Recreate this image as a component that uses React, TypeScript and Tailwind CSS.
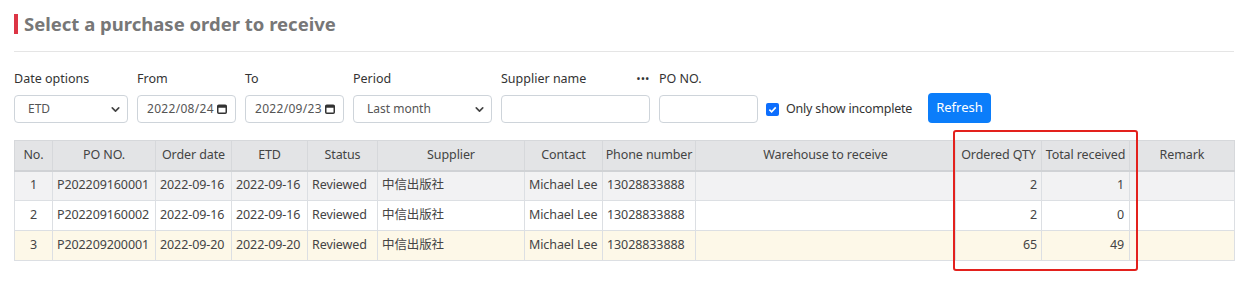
import { ChevronDown } from "lucide-react";

const cols = [
  { label: "No.", w: "w-[38px]" },
  { label: "PO NO.", w: "w-[103px]" },
  { label: "Order date", w: "w-[76px]" },
  { label: "ETD", w: "w-[76px]" },
  { label: "Status", w: "w-[70px]" },
  { label: "Supplier", w: "w-[147px]" },
  { label: "Contact", w: "w-[78px]" },
  { label: "Phone number", w: "w-[93px]" },
  { label: "Warehouse to receive", w: "w-[260px]" },
  { label: "Ordered QTY", w: "w-[86px]" },
  { label: "Total received", w: "w-[88px]" },
  { label: "Remark", w: "w-[105px]" },
];

const rows = [
  { no: 1, po: "P202209160001", date: "2022-09-16", etd: "2022-09-16", qty: 2, got: 1, bg: "bg-[#f2f2f3]" },
  { no: 2, po: "P202209160002", date: "2022-09-16", etd: "2022-09-16", qty: 2, got: 0, bg: "bg-white" },
  { no: 3, po: "P202209200001", date: "2022-09-20", etd: "2022-09-20", qty: 65, got: 49, bg: "bg-[#fdf8e8]" },
];

function Calendar() {
  return (
    <svg width="10" height="10" viewBox="0 0 10 10" className="ml-[3px]">
      <rect x="0.75" y="1.25" width="8.5" height="8" rx="1" fill="none" stroke="#333" strokeWidth="1.5" />
      <rect x="0.75" y="1.25" width="8.5" height="2.5" fill="#333" />
    </svg>
  );
}

function DateBox({ value }: { value: string }) {
  return (
    <div className="flex h-[28px] w-[99px] items-center rounded border border-[#ced4da] bg-white pl-[9px] text-[12px] tracking-[0.3px] text-[#555]">
      {value}
      <Calendar />
    </div>
  );
}

function Field({ label, children, className = "" }: { label: React.ReactNode; children: React.ReactNode; className?: string }) {
  return (
    <div className={`flex flex-col ${className}`}>
      <div className="mb-[7px] h-[18px] whitespace-nowrap text-[12.5px] leading-[18px] text-[#333]">{label}</div>
      {children}
    </div>
  );
}

const td = "border border-[#dcdfe3] px-[4px] whitespace-nowrap";

export default function App() {
  return (
    <div className="min-h-[293px] w-[1244px] bg-white pl-[14px] pr-[10px] pt-[11px] font-['Noto_Sans','Noto_Sans_CJK_SC',sans-serif]">
      {/* Title */}
      <div className="flex items-center pb-[15px]">
        <span className="mr-[6px] h-[20px] w-[4px] bg-[#dc3545]" />
        <h1 className="text-[18.5px] font-bold leading-[25px] text-[#777]">Select a purchase order to receive</h1>
      </div>
      <div className="h-px bg-[#e5e5e5]" />

      {/* Filters */}
      <div className="mt-[18px] flex items-end">
        <Field label="Date options" className="mr-[9px]">
          <div className="flex h-[28px] w-[114px] items-center justify-between rounded border border-[#ced4da] bg-white pl-[13px] pr-[5px] text-[12px] text-[#555]">
            ETD
            <ChevronDown className="h-[13px] w-[13px]" strokeWidth={3} color="#444" />
          </div>
        </Field>
        <Field label="From" className="mr-[9px]">
          <DateBox value="2022/08/24" />
        </Field>
        <Field label="To" className="mr-[9px]">
          <DateBox value="2022/09/23" />
        </Field>
        <Field label="Period" className="mr-[9px]">
          <div className="flex h-[28px] w-[139px] items-center justify-between rounded border border-[#ced4da] bg-white pl-[13px] pr-[5px] text-[12px] text-[#555]">
            Last month
            <ChevronDown className="h-[13px] w-[13px]" strokeWidth={3} color="#444" />
          </div>
        </Field>
        <Field
          label={
            <div className="flex w-[149px] justify-between">
              <span>Supplier name</span>
              <span className="text-[9px] font-bold tracking-[1px]">•••</span>
            </div>
          }
          className="mr-[9px]"
        >
          <div className="h-[28px] w-[149px] rounded border border-[#ced4da] bg-white" />
        </Field>
        <Field label="PO NO." className="mr-[8px]">
          <div className="h-[28px] w-[99px] rounded border border-[#ced4da] bg-white" />
        </Field>
        <div className="mb-[4px] flex h-[20px] items-center whitespace-nowrap text-[12.5px] tracking-[-0.2px] text-[#333]">
          <span className="mr-[7px] flex h-[13px] w-[13px] items-center justify-center rounded-[2px] bg-[#0d6efd]">
            <svg width="9" height="9" viewBox="0 0 10 10">
              <path d="M1.5 5.2 L4 7.6 L8.6 2.6" fill="none" stroke="white" strokeWidth="1.8" />
            </svg>
          </span>
          Only show incomplete
        </div>
        <button className="ml-[16px] flex h-[30px] items-center rounded-[4px] bg-[#0b7dfa] px-[8px] text-[13px] text-white">
          Refresh
        </button>
      </div>

      {/* Table */}
      <div className="relative mt-[17px]">
        <table className="w-[1220px] table-fixed border-collapse text-[12.5px] tracking-[-0.1px] text-[#444]">
          <thead>
            <tr className="h-[30px] bg-[#e3e4e6]">
              {cols.map((c) => (
                <th
                  key={c.label}
                  className={`${c.w} whitespace-nowrap border border-b-2 border-[#d6d8db] border-b-[#d0d2d5] px-[2px] text-center font-normal`}
                >
                  {c.label}
                </th>
              ))}
            </tr>
          </thead>
          <tbody>
            {rows.map((r) => (
              <tr key={r.no} className={`h-[30px] ${r.bg}`}>
                <td className={`${td} text-center`}>{r.no}</td>
                <td className={td}>{r.po}</td>
                <td className={td}>{r.date}</td>
                <td className={td}>{r.etd}</td>
                <td className={td}>Reviewed</td>
                <td className={td}>中信出版社</td>
                <td className={td}>Michael Lee</td>
                <td className={td}>13028833888</td>
                <td className={td} />
                <td className={`${td} text-right`}>{r.qty}</td>
                <td className={`${td} pr-[5px] text-right`}>{r.got}</td>
                <td className={td} />
              </tr>
            ))}
          </tbody>
        </table>
        {/* highlight box */}
        <div className="pointer-events-none absolute left-[939px] top-[-10px] h-[141px] w-[185px] rounded-[3px] border-2 border-[#e3211d]" />
      </div>
    </div>
  );
}
